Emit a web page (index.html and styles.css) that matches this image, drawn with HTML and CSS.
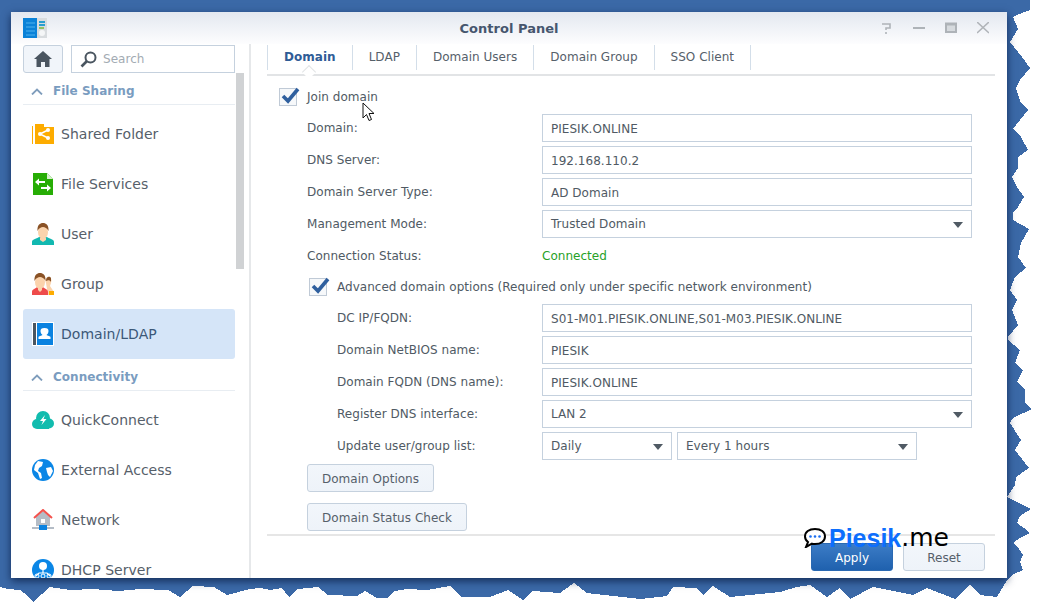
FILE: index.html
```html
<!DOCTYPE html>
<html lang="en">
<head>
    <meta charset="UTF-8">
    <title>Control Panel</title>
    <link rel="stylesheet" href="styles.css">
</head>
<body>
<div class="desktop">
    <svg class="torn" width="1038" height="610" viewBox="0 0 1038 610">
        <path shape-rendering="crispEdges" fill="#3b69a7" d="M0 0H1030V10L1024 12L1013 17L1018 29L1010 42L1022 57L1030 68L1020 80L1016 88L1021 103L1028 110L1020 120L1013 129L1021 137L1028 150L1018 157L1018 168L1012 177L1017 187L1024 197L1018 207L1013 213L1013 220L1029 229L1021 243L1018 257L1026 268L1015 277L1010 290L1017 300L1012 310L1018 325L1008 337L1008 340L1020 350L1015 363L1023 370L1017 382L1025 390L1025 403L1032 409L1013 418L1010 423L1021 440L1015 450L1029 468L1016 477L1015 485L1007 497L1031 509L1020 516L1017 523L1024 528L1030 533L1020 538L1013 543L1019 549L1023 555L1020 562L1023 570L1014 574L1007 580L997 597L980 595L970 584L955 599L927 588L913 595L873 587L850 599L840 588L827 597L810 585L797 587L780 592L770 593L750 595L730 597L713 586L703 595L697 588L673 587L667 596L640 599L613 596L587 593L574 583L560 593L533 591L523 600L508 590L490 597L462 597L450 586L427 590L407 589L395 591L387 598L377 598L365 591L357 596L328 595L318 587L298 589L289 597L282 588L270 590L260 588L250 589L227 595L214 587L193 586L180 597L168 590L140 589L118 591L93 589L70 590L50 587L42 594L33 602L28 596L20 590L8 589L0 587Z"/>
    </svg>

    <div class="window">
        <div class="titlebar">
            <svg class="app-icon" width="24" height="21" viewBox="0 0 24 21">
                <rect width="14" height="20" fill="#0a82d8"/>
                <path d="M3 5h9M3 9h9M3 13h9M3 17h9" stroke="#4fb2ee" stroke-width="1"/>
                <rect x="14" width="10" height="20" fill="#d8dcdf"/>
                <path d="M16 4h6M16 7h6" stroke="#2a9fd0" stroke-width="2"/>
                <path d="M16 10h5" stroke="#7ab93a" stroke-width="1.5"/>
                <circle cx="19" cy="15" r="3" fill="#f4f6f7"/>
            </svg>
            <span class="title">Control Panel</span>
            <div class="win-buttons">
                <svg width="12" height="12" viewBox="0 0 12 12"><path d="M1 2h8v4H5v2M5 10v2" fill="none" stroke="#aeb3b8" stroke-width="1.6"/></svg>
                <svg width="12" height="12" viewBox="0 0 12 12"><path d="M0 6h12" stroke="#aeb3b8" stroke-width="2"/></svg>
                <svg width="12" height="12" viewBox="0 0 12 12"><path d="M0 1h12v10H0z" fill="#d6dade"/><path d="M1 2.500h10V10H1z" fill="none" stroke="#aeb3b8" stroke-width="2"/><path d="M0 1.500h12" stroke="#aeb3b8" stroke-width="2"/></svg>
                <svg width="12" height="12" viewBox="0 0 12 12"><path d="M0 0l12 11M12 0L0 11" stroke="#b0b4b9" stroke-width="1.6"/></svg>
            </div>
        </div>

        <div class="content">
            <div class="sidebar">
                <div class="scrollbar"></div>
                <div class="side-top">
                    <div class="home-btn">
                        <svg width="18" height="16" viewBox="0 0 18 16"><path d="M9 0L0 8h2.500v8h4.500v-5h4v5h4.500V8H18z" fill="#4a5560"/></svg>
                    </div>
                    <div class="search">
                        <svg width="17" height="17" viewBox="0 0 17 17"><circle cx="10.500" cy="6.500" r="5" fill="none" stroke="#4a5560" stroke-width="2"/><path d="M7 10l-5.500 5.500" stroke="#4a5560" stroke-width="2.600"/></svg>
                        <span>Search</span>
                    </div>
                </div>

                <div class="group-head">
                    <svg width="12" height="7" viewBox="0 0 12 7"><path d="M1 6.500l5-5 5 5" fill="none" stroke="#7f9dbc" stroke-width="1.800"/></svg>
                    <span>File Sharing</span>
                </div>
                <div class="side-item">
                    <svg width="22" height="20" viewBox="0 0 22 20"><path d="M0 2h1v18H0zM3 0h9v3h10v17H3z" fill="#fdac00"/><path d="M8 10l8-4M8 10l8 4" stroke="#fff" stroke-width="1.500"/><circle cx="8" cy="10" r="2" fill="#fff"/><circle cx="16" cy="6" r="2" fill="#fff"/><circle cx="16" cy="14" r="2" fill="#fff"/></svg>
                    <span>Shared Folder</span>
                </div>
                <div class="side-item">
                    <svg width="22" height="22" viewBox="0 0 22 22"><path d="M1 0h14l6 6v16H1z" fill="#27ad05"/><path d="M15 0l6 6h-6z" fill="#d6f0cc"/><path d="M3 9l4-3.500V8h6v2H7v2.500z" fill="#fff"/><path d="M19 15l-4-3.500V14H9v2h6v2.500z" fill="#fff"/></svg>
                    <span>File Services</span>
                </div>
                <div class="side-item">
                    <svg width="22" height="22" viewBox="0 0 22 22"><path d="M0 22v-3c0-3 4-3 7-5h8c3 2 7 2 7 5v3z" fill="#12b8b0"/><ellipse cx="11" cy="9" rx="5" ry="7" fill="#fbd3ac"/><path d="M8 15h6v2l-3 2-3-2z" fill="#fbd3ac"/><path d="M5.500 8C5 2 8 0 11 0s6 2 5.500 8C15 5 13 4 11 4S7 5 5.500 8z" fill="#8a5226"/></svg>
                    <span>User</span>
                </div>
                <div class="side-item">
                    <svg width="22" height="22" viewBox="0 0 22 22"><path d="M14 10a3 4 0 1 1 5 0l-1 3 4 6v3h-6z" fill="#fbd3ac"/><path d="M14 8c0-5 4-5 5-3v4c-1-2-3-2-5-1z" fill="#8a5226"/><path d="M17 18h5v4h-5z" fill="#fdac00"/><path d="M0 22v-3c0-3 3-3 5-5h6c2 2 5 2 5 5v3z" fill="#ee4b4b"/><ellipse cx="8" cy="9" rx="5" ry="7" fill="#fbd3ac"/><path d="M6 15h4v2l-2 2-2-2z" fill="#fbd3ac"/><path d="M2.500 8C2 2 5 0 8 0s6 2 5.500 8C12 5 10 4 8 4S4 5 2.500 8z" fill="#8a5226"/></svg>
                    <span>Group</span>
                </div>
                <div class="side-item selected">
                    <svg width="22" height="24" viewBox="0 0 22 24"><rect width="22" height="24" fill="#fff"/><rect x="1" y="1" width="3" height="22" fill="#4a5560"/><rect x="5" y="1" width="16" height="22" fill="#0a82e0"/><path d="M7 18v-2c0-1 3-1 4-2-1-1-2-2-2-4 0-2 1-3 4-3s4 1 4 3c0 2-1 3-2 4 1 1 4 1 4 2v2z" fill="#fff" transform="translate(-.5 -1)"/></svg>
                    <span>Domain/LDAP</span>
                </div>
                <div class="group-head">
                    <svg width="12" height="7" viewBox="0 0 12 7"><path d="M1 6.500l5-5 5 5" fill="none" stroke="#7f9dbc" stroke-width="1.800"/></svg>
                    <span>Connectivity</span>
                </div>
                <div class="side-item">
                    <svg width="22" height="18" viewBox="0 0 22 18"><g fill="#11bcae"><circle cx="5" cy="13" r="5"/><circle cx="11" cy="7" r="7"/><circle cx="17" cy="12.500" r="5"/><rect x="5" y="12" width="12" height="6"/></g><path d="M13 4l-5 6h3l-1.500 4 5-6h-3z" fill="#fff"/></svg>
                    <span>QuickConnect</span>
                </div>
                <div class="side-item">
                    <svg width="22" height="22" viewBox="0 0 22 22"><circle cx="11" cy="11" r="11" fill="#0a86e6"/><path d="M6 2l5 1-1 4-3 2-1 3 3 2 1 5-2 1-2-6-4-3 1-5zM14 9l5-1 2 4-3 6-2-2-1-3z" fill="#fff"/></svg>
                    <span>External Access</span>
                </div>
                <div class="side-item">
                    <svg width="22" height="22" viewBox="0 0 22 22"><path d="M4 8l7-6 7 6v9H4z" fill="#b4bcc6"/><path d="M2 9l9-8 9 8" fill="none" stroke="#f4524d" stroke-width="2"/><rect x="9" y="10" width="4" height="4" fill="#fff"/><rect y="18" width="22" height="2" fill="#b4bcc6"/><rect x="7" y="16" width="8" height="5" fill="#0a82e0"/></svg>
                    <span>Network</span>
                </div>
                <div class="side-item">
                    <svg width="22" height="22" viewBox="0 0 22 22"><circle cx="11" cy="11" r="11" fill="#0a86e6"/><circle cx="11" cy="7" r="4" fill="#fff"/><path d="M11 10v4M4 17l3-3h8l3 3" fill="none" stroke="#fff" stroke-width="1.200"/><circle cx="5" cy="17" r="2" fill="none" stroke="#fff"/><circle cx="11" cy="17" r="2" fill="none" stroke="#fff"/><circle cx="17" cy="17" r="2" fill="none" stroke="#fff"/></svg>
                    <span>DHCP Server</span>
                </div>
            </div>

            <div class="main">
                <div class="tabs">
                    <div class="tab active">Domain</div>
                    <div class="tab">LDAP</div>
                    <div class="tab">Domain Users</div>
                    <div class="tab">Domain Group</div>
                    <div class="tab">SSO Client</div>
                </div>

                <div class="form">
                    <div class="check-row">
                        <span class="checkbox"><svg width="20" height="18" viewBox="0 0 20 18"><path d="M3 9l5 5L18 2" fill="none" stroke="#2f5f9e" stroke-width="3.600"/></svg></span>
                        <span>Join domain</span>
                    </div>
                    <div class="row"><label>Domain:</label><div class="field">PIESIK.ONLINE</div></div>
                    <div class="row"><label>DNS Server:</label><div class="field">192.168.110.2</div></div>
                    <div class="row"><label>Domain Server Type:</label><div class="field">AD Domain</div></div>
                    <div class="row"><label>Management Mode:</label><div class="field select">Trusted Domain</div></div>
                    <div class="row status-row"><label>Connection Status:</label><div class="connected">Connected</div></div>

                    <div class="check-row sub">
                        <span class="checkbox"><svg width="20" height="18" viewBox="0 0 20 18"><path d="M3 9l5 5L18 2" fill="none" stroke="#2f5f9e" stroke-width="3.600"/></svg></span>
                        <span>Advanced domain options (Required only under specific network environment)</span>
                    </div>
                    <div class="row sub"><label>DC IP/FQDN:</label><div class="field">S01-M01.PIESIK.ONLINE,S01-M03.PIESIK.ONLINE</div></div>
                    <div class="row sub"><label>Domain NetBIOS name:</label><div class="field">PIESIK</div></div>
                    <div class="row sub"><label>Domain FQDN (DNS name):</label><div class="field">PIESIK.ONLINE</div></div>
                    <div class="row sub"><label>Register DNS interface:</label><div class="field select">LAN 2</div></div>
                    <div class="row sub">
                        <label>Update user/group list:</label>
                        <div class="field-pair">
                            <div class="field select daily">Daily</div>
                            <div class="field select hours">Every 1 hours</div>
                        </div>
                    </div>
                    <div class="btn option-btn">Domain Options</div>
                    <div class="btn check-btn">Domain Status Check</div>
                </div>

                <div class="footer">
                    <div class="btn primary">Apply</div>
                    <div class="btn reset">Reset</div>
                </div>
            </div>
        </div>
    </div>

    <svg class="cursor" width="13" height="20" viewBox="0 0 13 20"><path d="M1 1v15l3.500-3.500 2.500 6 2.500-1-2.500-6H12z" fill="#fff" stroke="#111" stroke-width="1"/></svg>

    <div class="watermark">
        <svg width="22" height="20" viewBox="0 0 22 20"><path d="M11 1c6 0 10 3 10 7.500S17 16 11 16c-1 0-2 0-3-.3L2 19l2-5C2 12.500 1 10.500 1 8.500 1 4 5 1 11 1z" fill="#fff" stroke="#000" stroke-width="2"/><circle cx="6.500" cy="8.500" r="1.300" fill="#1a6df0"/><circle cx="11" cy="8.500" r="1.300" fill="#1a6df0"/><circle cx="15.500" cy="8.500" r="1.300" fill="#1a6df0"/></svg>
        <span class="wm-name">Piesik</span><span class="wm-dom">.me</span>
    </div>
</div>
</body>
</html>
```

FILE: styles.css
```css
html, body {
    margin: 0;
    padding: 0;
    background: #fff;
}

.desktop {
    position: relative;
    width: 1038px;
    height: 610px;
    overflow: hidden;
    font-family: "DejaVu Sans", sans-serif;
    font-size: 12px;
    letter-spacing: 0.03px;
    color: #505a64;
}

.torn {
    position: absolute;
    left: 0;
    top: 0;
}

/* window sits on the blue desktop */
.window {
    position: absolute;
    left: 11px;
    top: 12px;
    width: 996px;
    height: 566px;
    background: #fff;
    display: flex;
    flex-direction: column;
    box-shadow: 0 3px 8px rgba(10, 30, 70, 0.8);
}

.titlebar {
    height: 32px;
    flex: none;
    box-sizing: border-box;
    padding-top: 1px;
    display: flex;
    align-items: center;
    justify-content: center;
    position: relative;
    background: linear-gradient(#e3e8f0, #fdfdfe);
}

.app-icon {
    position: absolute;
    left: 12px;
    top: 6px;
}

.title {
    font-weight: bold;
    font-size: 13px;
    color: #46566e;
}

.win-buttons {
    position: absolute;
    right: 18px;
    top: 10px;
    display: flex;
    gap: 20px;
}

.content {
    flex: 1;
    display: flex;
    min-height: 0;
}

.sidebar {
    width: 212px;
    flex: none;
    padding: 0 14px 0 12px;
    border-right: 2px solid #e6e8ea;
    position: relative;
    overflow: hidden;
}

.scrollbar {
    position: absolute;
    left: 225px;
    top: 29px;
    width: 8px;
    height: 196px;
    background: #d0d2d4;
}

.side-top {
    display: flex;
    gap: 8px;
    margin-top: 1px;
}

.home-btn {
    width: 38px;
    height: 26px;
    border: 1px solid #c5d1de;
    border-radius: 3px;
    background: #f1f5fa;
    display: flex;
    align-items: center;
    justify-content: center;
}

.search {
    flex: 1;
    height: 26px;
    border: 1px solid #c5d1de;
    display: flex;
    align-items: center;
    gap: 6px;
    padding-left: 8px;
    color: #a3abb3;
}

.group-head {
    height: 26px;
    padding: 5px 0 0 8px;
    display: flex;
    align-items: center;
    gap: 10px;
    border-bottom: 1px solid #e8edf2;
    font-weight: bold;
    color: #7a9cc0;
    margin-bottom: 4px;
    font-size: 12px;
}

.side-item {
    height: 50px;
    display: flex;
    align-items: center;
    font-size: 14px;
    color: #56606a;
    border-radius: 3px;
}

.side-item svg {
    margin-left: 9px;
    flex: none;
}

.side-item svg + span {
    margin-left: 7px;
}

.side-item.selected {
    background: #d5e5f8;
    color: #3c5878;
}

.main {
    flex: 1;
    min-width: 0;
    padding: 0 12px 0 16px;
    display: flex;
    flex-direction: column;
}

.tabs {
    flex: none;
    display: flex;
    border-bottom: 2px solid #e2e4e6;
    box-sizing: border-box;
    height: 32px;
    position: relative;
}

.tab {
    padding: 0 16px;
    line-height: 25px;
    height: 25px;
    margin-top: 1px;
    border-right: 1px solid #d3dee9;
    color: #56606a;
}

.tab.active {
    font-weight: bold;
    color: #2f5c96;
    border-left: 1px solid #d3dee9;
    position: relative;
}

.tab.active::after {
    content: "";
    position: absolute;
    left: 36px;
    bottom: -7px;
    width: 9px;
    height: 9px;
    background: #fff;
    border-left: 1px solid #e2e4e6;
    border-top: 1px solid #e2e4e6;
    transform: rotate(45deg);
}

.form {
    flex: 1;
    min-height: 0;
    padding: 6px 0 0 12px;
    display: flex;
    flex-direction: column;
    gap: 4px;
    overflow: hidden;
}

.check-row {
    height: 28px;
    display: flex;
    align-items: center;
    gap: 10px;
    flex: none;
    padding-top: 1px;
    box-sizing: border-box;
}

.check-row.sub {
    margin-left: 30px;
}

.checkbox {
    width: 16px;
    height: 16px;
    border: 1px solid #c0cad6;
    background: #f6f8fa;
    position: relative;
    display: block;
    flex: none;
}

.checkbox svg {
    position: absolute;
    left: 0;
    top: -2px;
}

.row {
    height: 28px;
    display: flex;
    align-items: center;
    flex: none;
    padding-left: 28px;
}

.row label {
    width: 235px;
    flex: none;
}

.row.sub {
    padding-left: 58px;
}

.row.sub label {
    width: 205px;
}

.status-row {
    margin-bottom: -2px;
}

.connected {
    color: #27a127;
}

.field {
    width: 430px;
    height: 28px;
    box-sizing: border-box;
    border: 1px solid #c5d1de;
    padding-left: 8px;
    line-height: 28px;
    position: relative;
}

.select {
    line-height: 26px;
}

.select::after {
    content: "";
    position: absolute;
    right: 8px;
    top: 11px;
    border-left: 5.500px solid transparent;
    border-right: 5.500px solid transparent;
    border-top: 6px solid #505a64;
}

.field-pair {
    display: flex;
    gap: 5px;
}

.daily {
    width: 130px;
}

.hours {
    width: 240px;
}

.btn {
    height: 28px;
    box-sizing: border-box;
    border: 1px solid #c5d1de;
    border-radius: 3px;
    background: linear-gradient(#f2f6fb, #eef3f9);
    line-height: 28px;
    text-align: center;
    color: #56606a;
    flex: none;
}

.option-btn {
    width: 127px;
    margin-left: 28px;
}

.check-btn {
    width: 160px;
    margin-left: 28px;
    margin-top: 7px;
}

.footer {
    height: 44px;
    flex: none;
    box-sizing: border-box;
    border-top: 2px solid #e6e6e6;
    display: flex;
    justify-content: flex-end;
    gap: 10px;
    padding: 7px 10px 0 0;
}

.footer .btn {
    width: 82px;
}

.primary {
    background: linear-gradient(#3c7cc6, #1f61ae);
    border-color: #2a69b2;
    color: #fff;
}

.cursor {
    position: absolute;
    left: 362px;
    top: 102px;
}

.watermark {
    position: absolute;
    left: 804px;
    top: 524px;
    display: flex;
    align-items: center;
    font-family: "Liberation Sans", sans-serif;
    font-size: 25px;
    line-height: 28px;
    letter-spacing: 0;
}

.wm-name {
    margin-left: 3px;
    font-weight: bold;
    color: #0d6efd;
}

.wm-dom {
    font-family: "DejaVu Sans", sans-serif;
    font-size: 25px;
    color: #000;
}
```
